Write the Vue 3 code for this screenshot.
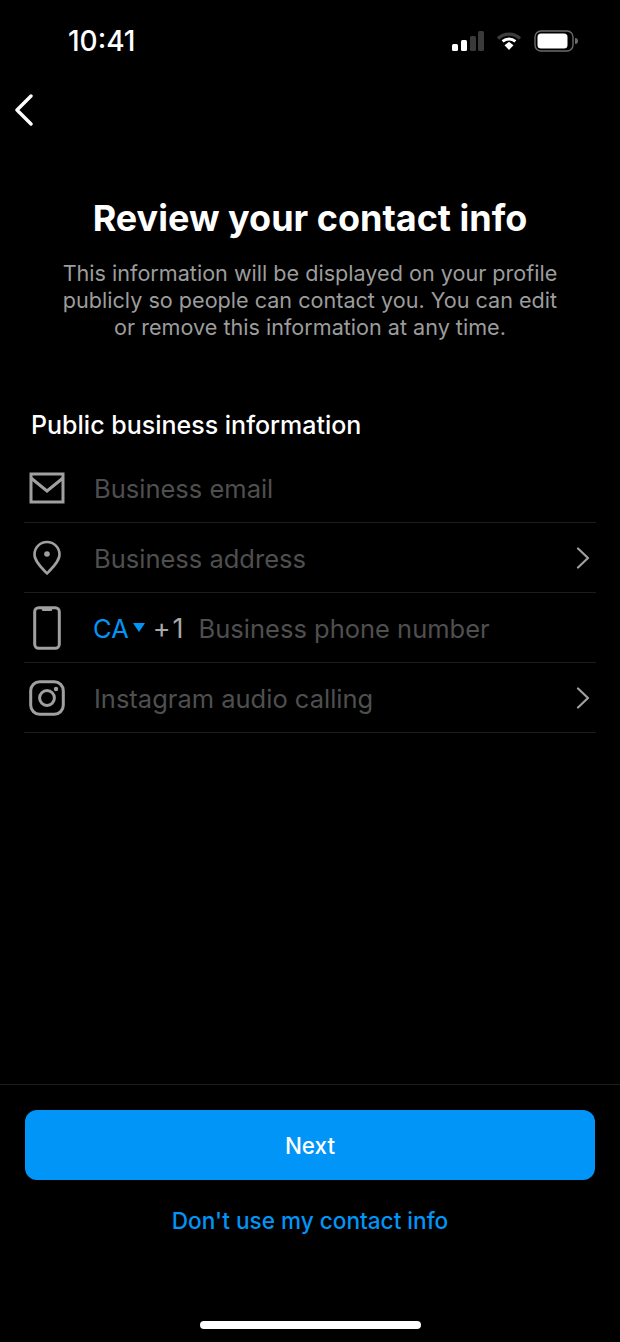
<script setup>
const rows = [
  { id: 'email', label: 'Business email' },
  { id: 'address', label: 'Business address', chevron: true },
  { id: 'phone', label: 'Business phone number', phone: true },
  { id: 'audio', label: 'Instagram audio calling', chevron: true },
]
</script>

<template>
  <div class="screen">
    <!-- status bar -->
    <div class="status">
      <span class="time">10:41</span>
      <div class="status-icons">
        <svg width="32" height="20" viewBox="0 0 32 20">
          <rect x="0" y="13" width="6" height="7" rx="1.5" fill="#fff" />
          <rect x="9" y="9" width="6" height="11" rx="1.5" fill="#fff" />
          <rect x="18" y="5" width="6" height="15" rx="1.5" fill="#3a3a3a" />
          <rect x="26" y="0" width="6" height="20" rx="1.5" fill="#3a3a3a" />
        </svg>
        <svg width="26" height="20" viewBox="0 0 26 20">
          <path d="M2 7.5 A16 16 0 0 1 24 7.5" fill="none" stroke="#3d3d3d" stroke-width="3.4" />
          <path d="M6.6 10.4 A10 10 0 0 1 19.4 10.4" fill="none" stroke="#fff" stroke-width="3" />
          <path d="M8.5 14.2 L13 10.8 L17.5 14.2 L13 19 Z" fill="#fff" />
        </svg>
        <svg width="44" height="22" viewBox="0 0 44 22">
          <rect x="1" y="1" width="38" height="20" rx="6" fill="none" stroke="#6b6b6b" stroke-width="1.4" />
          <rect x="3.5" y="3.5" width="30" height="15" rx="3.5" fill="#fff" />
          <path d="M41 8 a3 3 0 0 1 0 6 Z" fill="#6b6b6b" />
        </svg>
      </div>
    </div>

    <!-- nav -->
    <div class="nav">
      <svg width="20" height="32" viewBox="0 0 20 32">
        <path d="M17 2 L3 16 L17 30" fill="none" stroke="#fff" stroke-width="3.4" stroke-linecap="round" stroke-linejoin="round" />
      </svg>
    </div>

    <div class="head">
      <h1>Review your contact info</h1>
      <p>This information will be displayed on your profile publicly so people can contact you. You can edit or remove this information at any time.</p>
    </div>

    <h2>Public business information</h2>

    <div class="list">
      <div v-for="row in rows" :key="row.id" class="row">
        <div class="row-icon">
          <svg v-if="row.id === 'email'" width="36" height="32" viewBox="0 0 36 32">
            <rect x="2" y="2" width="32" height="28" fill="none" stroke="#a0a0a0" stroke-width="3" />
            <path d="M2 6 L18 19 L34 6" fill="none" stroke="#a0a0a0" stroke-width="3" />
          </svg>
          <svg v-else-if="row.id === 'address'" width="30" height="36" viewBox="0 0 30 36">
            <path d="M15 33.5 C10 28 2.5 21.5 2.5 14.5 A12.5 12.5 0 0 1 27.5 14.5 C27.5 21.5 20 28 15 33.5 Z" fill="none" stroke="#a0a0a0" stroke-width="2.6" stroke-linejoin="round" />
            <circle cx="15" cy="14" r="2.8" fill="#a0a0a0" />
          </svg>
          <svg v-else-if="row.id === 'phone'" width="28" height="44" viewBox="0 0 28 44">
            <rect x="1.7" y="1.7" width="24.6" height="40.6" rx="4" fill="none" stroke="#a0a0a0" stroke-width="3" />
            <path d="M8 2 h12 l-1.5 3 h-9 Z" fill="#a0a0a0" />
          </svg>
          <svg v-else width="36" height="36" viewBox="0 0 36 36">
            <rect x="1.7" y="1.7" width="32.6" height="32.6" rx="9" fill="none" stroke="#a0a0a0" stroke-width="3" />
            <circle cx="18" cy="18" r="7.4" fill="none" stroke="#a0a0a0" stroke-width="3" />
            <circle cx="27" cy="9" r="2.2" fill="#a0a0a0" />
          </svg>
        </div>
        <template v-if="row.phone">
          <span class="country">CA</span>
          <span class="caret"></span>
          <span class="code">+1</span>
        </template>
        <span class="label">{{ row.label }}</span>
        <svg v-if="row.chevron" class="chev" width="14" height="22" viewBox="0 0 14 22">
          <path d="M2 1.5 L12 11 L2 20.5" fill="none" stroke="#a0a0a0" stroke-width="2.2" stroke-linecap="round" stroke-linejoin="round" />
        </svg>
      </div>
    </div>

    <div class="footer">
      <button class="next">Next</button>
      <a class="skip">Don't use my contact info</a>
    </div>
    <div class="home-wrap"><div class="home"></div></div>
  </div>
</template>

<style>
html, body { margin: 0; background: #000; }
</style>

<style scoped>
.screen {
  width: 620px;
  height: 1342px;
  background: #000;
  color: #fff;
  font-family: Inter, "Liberation Sans", sans-serif;
  display: flex;
  flex-direction: column;
  overflow: hidden;
}
.status {
  height: 82px;
  display: flex;
  justify-content: space-between;
  align-items: center;
  padding: 0 41px 0 68px;
  box-sizing: border-box;
}
.time { font-size: 28px; font-weight: 500; }
.status-icons { display: flex; align-items: center; gap: 12px; margin-right: 1px; }
.nav { height: 56px; padding: 12px 0 0 14px; box-sizing: border-box; }
.head { padding: 0 50px; text-align: center; margin-top: 57px; }
h1 { margin: 0 -20px; font-size: 36px; line-height: 46px; font-weight: 700; white-space: nowrap; }
p { margin: 19px 0 0; font-size: 21.6px; line-height: 27px; color: #9c9c9c; }
h2 { margin: 68px 0 0 31px; font-size: 25px; line-height: 32px; font-weight: 500; }
.list { margin: 12px 24px 0; }
.row {
  height: 70px;
  display: flex;
  align-items: center;
  border-bottom: 1px solid #1c1c1c;
  box-sizing: border-box;
  font-size: 25.5px;
}
.row-icon { width: 46px; margin-right: 24px; display: flex; justify-content: center; }
.row-icon + .country { margin-left: -1px; }
.label, .country, .code { padding-top: 2px; }
.label { color: #4f4f4f; }
.country { color: #0095f6; }
.caret { width: 0; height: 0; border-left: 6.5px solid transparent; border-right: 6.5px solid transparent; border-top: 9px solid #0095f6; margin: -1px 8px 0 4px; }
.code { color: #a8a8a8; font-size: 27px; margin-right: 13px; letter-spacing: 2px; }
.chev { margin-left: auto; margin-right: 6px; }
.footer {
  margin-top: auto;
  border-top: 1px solid #1c1c1c;
  padding: 25px 25px 0;
  display: flex;
  flex-direction: column;
  align-items: center;
}
.next {
  width: 100%;
  height: 70px;
  background: #0095f6;
  color: #fff;
  border: 0;
  border-radius: 12px;
  font: 500 22.4px Inter, "Liberation Sans", sans-serif;
}
.skip { margin-top: 27px; color: #0095f6; font-size: 22.6px; line-height: 28px; font-weight: 500; }
.home-wrap { height: 127px; display: flex; justify-content: center; align-items: flex-end; padding-bottom: 13px; box-sizing: border-box; margin-top: -20px; }
.home { width: 221px; height: 8px; background: #fff; border-radius: 4px; }
</style>
